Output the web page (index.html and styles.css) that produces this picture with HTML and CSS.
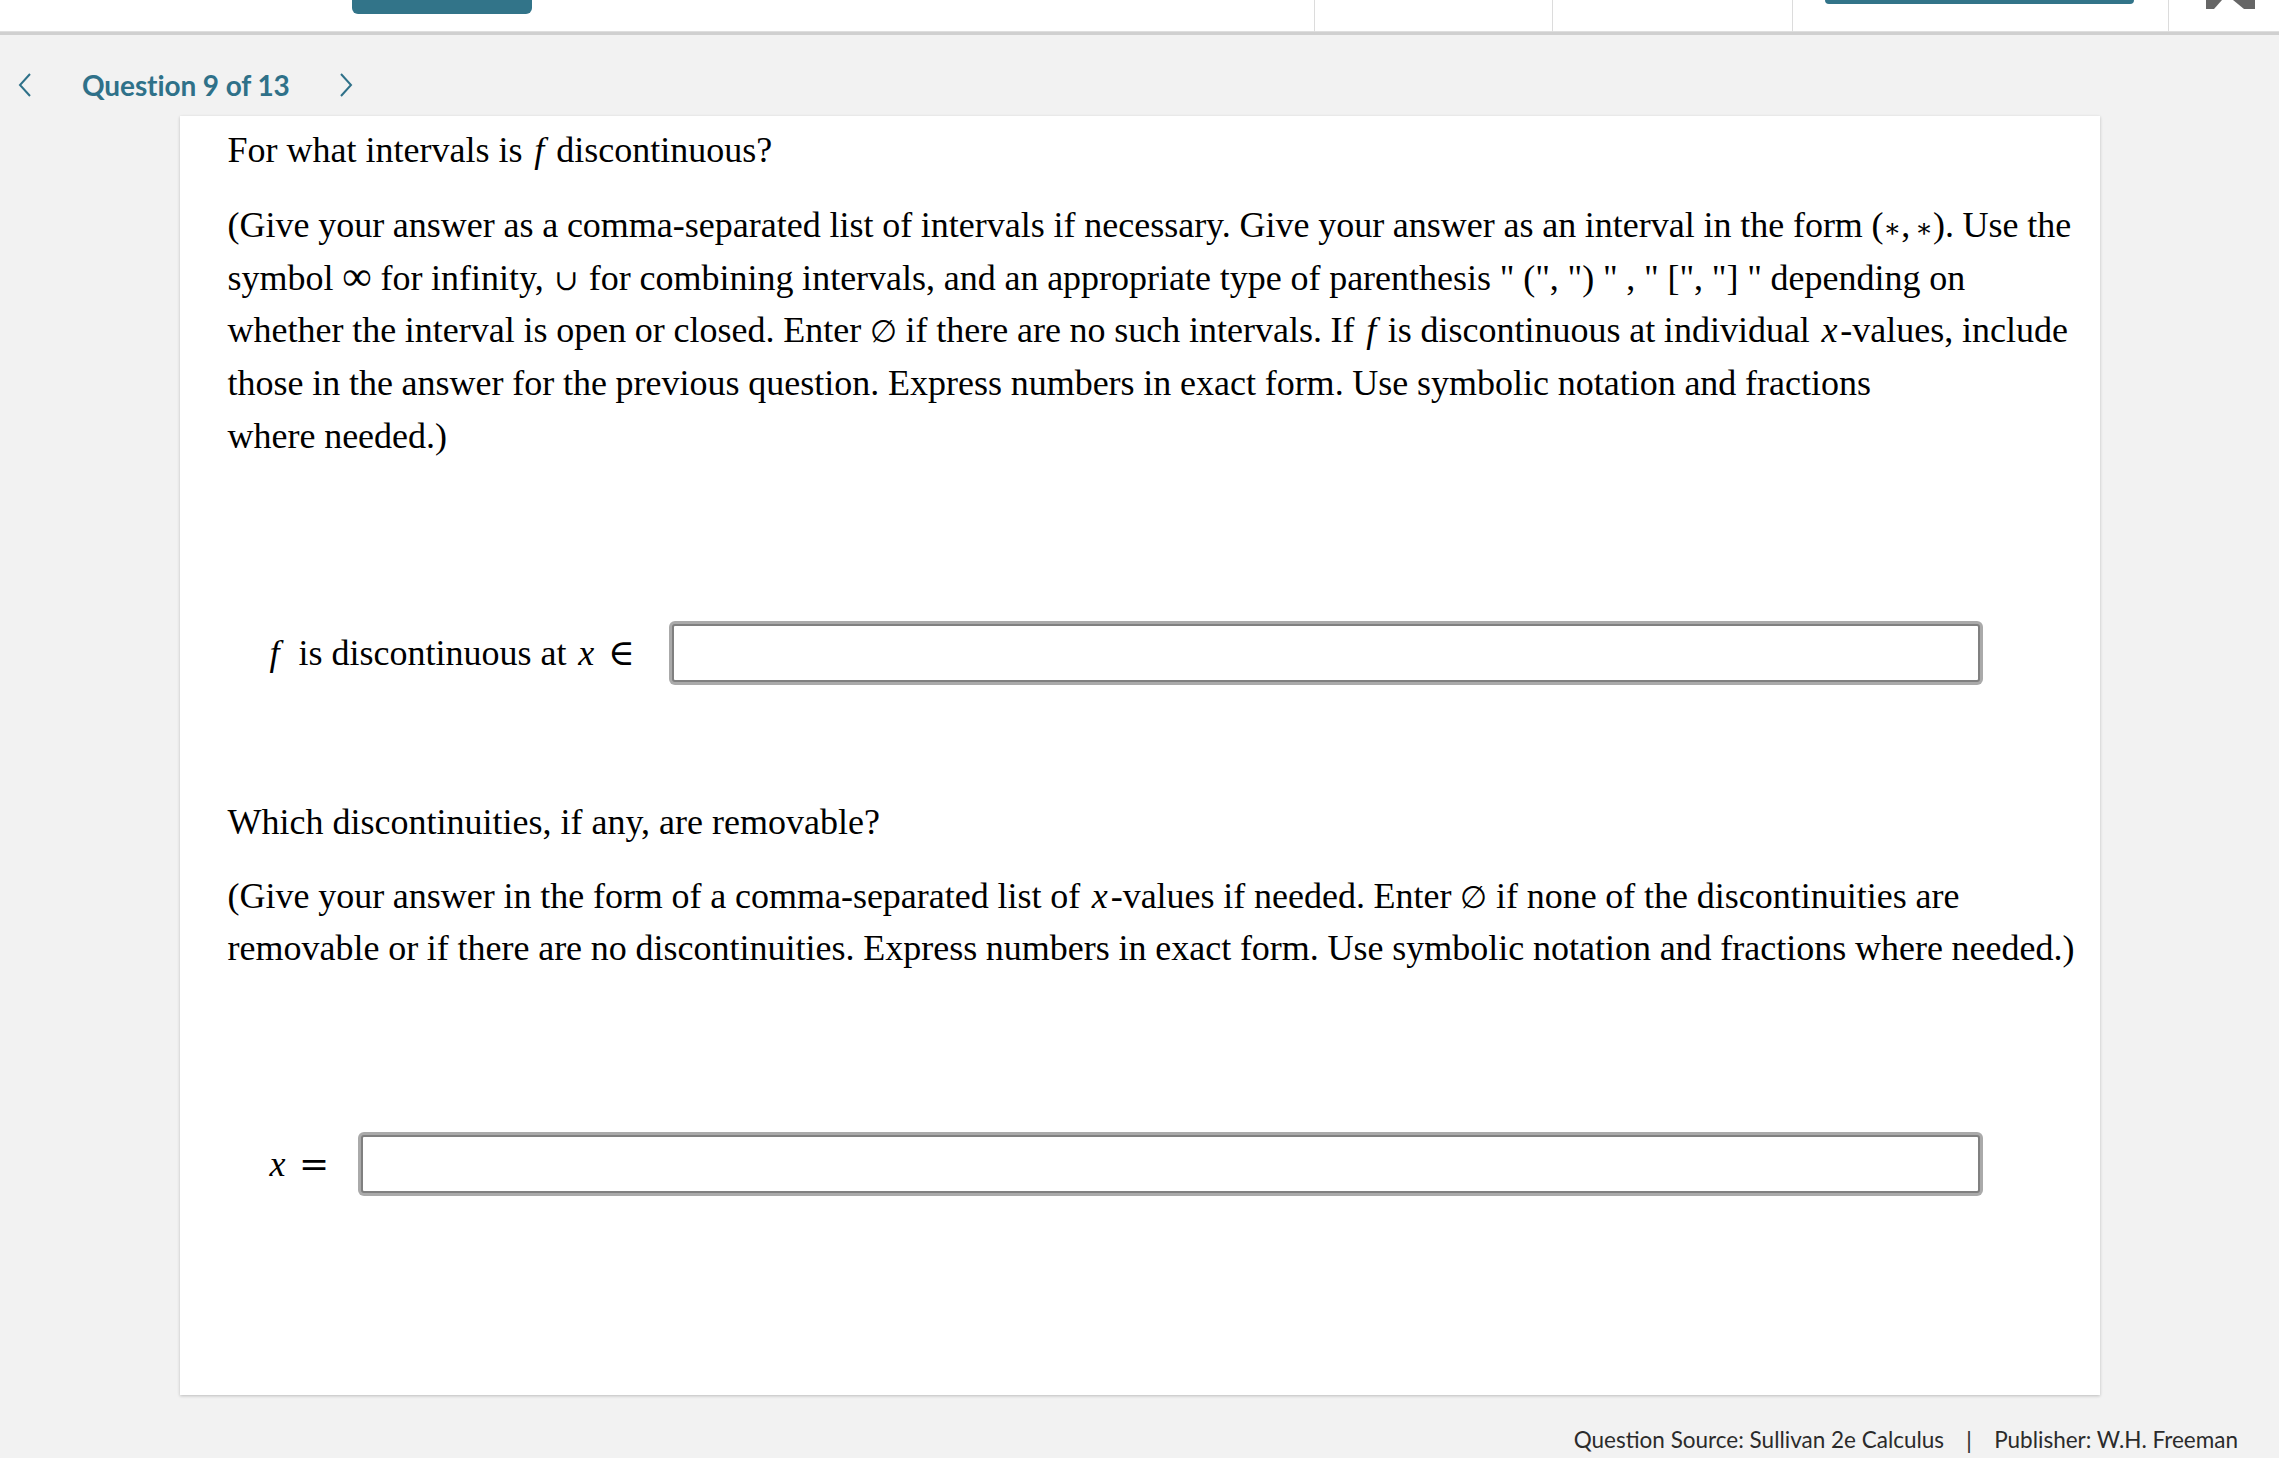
FILE: index.html
```html
<!DOCTYPE html>
<html lang="en">
<head>
<meta charset="utf-8">
<title>Question 9 of 13</title>
<link rel="stylesheet" href="styles.css">
</head>
<body>
<header class="topbar">
  <div class="seg seg-main"><span class="tab-btn"></span></div>
  <div class="seg seg-a"></div>
  <div class="seg seg-b"></div>
  <div class="seg seg-c"><span class="top-bar-accent"></span></div>
  <div class="seg seg-d">
    <svg class="top-icon" width="49" height="10" viewBox="0 0 49 10"><polygon points="0,0 16,0 8,9 0,9" fill="#666"/><polygon points="27,0 49,0 49,9 38,9" fill="#666"/></svg>
  </div>
</header>

<nav class="qnav">
  <svg class="chev chev-left" width="14" height="24" viewBox="0 0 14 24"><polyline points="12,1 2,12 12,23" fill="none" stroke="#2f7189" stroke-width="2"/></svg>
  <span class="qnav-title">Question 9 of 13</span>
  <svg class="chev chev-right" width="14" height="24" viewBox="0 0 14 24"><polyline points="2,1 12,12 2,23" fill="none" stroke="#2f7189" stroke-width="2"/></svg>
</nav>

<main class="card">
  <p class="q-heading">For what intervals is <i class="m">f</i> discontinuous?</p>
  <p class="q-text">(Give your answer as a comma-separated list of intervals if necessary. Give your answer as an interval in the form (<span class="sym ast">∗</span>,<span class="thin"> </span><span class="sym ast">∗</span>). Use the symbol <span class="inf">∞</span> for infinity, <span class="sym cup">∪</span> for combining intervals, and an appropriate type of parenthesis " (", ") " , " [", "] " depending on whether the interval is open or closed. Enter <span class="sym empty">∅</span> if there are no such intervals. If <i class="m">f</i> is discontinuous at individual <i class="m">x</i>-values, include those in the answer for the previous question. Express numbers in exact form. Use symbolic notation and fractions<br>where needed.)</p>

  <div class="answer-row row-1">
    <label class="answer-label"><i class="m m-f">f</i> is discontinuous at <i class="m">x</i> <span class="sym rel">∈</span></label>
    <input class="answer-input" type="text" aria-label="f is discontinuous at x in">
  </div>

  <p class="q-heading q-heading-2">Which discontinuities, if any, are removable?</p>
  <p class="q-text">(Give your answer in the form of a comma-separated list of <i class="m">x</i>-values if needed. Enter <span class="sym empty">∅</span> if none of the discontinuities are removable or if there are no discontinuities. Express numbers in exact form. Use symbolic notation and fractions where needed.)</p>

  <div class="answer-row row-2">
    <label class="answer-label"><i class="m">x</i> <span class="sym rel">=</span></label>
    <input class="answer-input" type="text" aria-label="x equals">
  </div>
</main>

<footer class="source">
  <span>Question Source: Sullivan 2e Calculus</span>
  <span class="sep">|</span>
  <span>Publisher: W.H. Freeman</span>
</footer>
</body>
</html>
```

FILE: styles.css
```css
html, body {
  margin: 0;
  padding: 0;
}
body {
  background: #f2f2f2;
  font-family: "Liberation Serif", "Times New Roman", serif;
  color: #000;
}

/* top bar */
.topbar {
  display: flex;
  height: 32px;
  background: #fff;
  border-bottom: 3px solid #d0d0d0;
  box-shadow: inset 0 -1px 0 #dedede;
}
.seg {
  height: 32px;
  box-sizing: border-box;
}
.seg-main { width: 1314px; }
.seg-a { width: 238px; border-left: 1px solid #dcdcdc; }
.seg-b { width: 240px; border-left: 1px solid #dcdcdc; }
.seg-c { width: 376px; border-left: 1px solid #dcdcdc; }
.seg-d { flex: 1; border-left: 1px solid #dcdcdc; }
.tab-btn {
  display: block;
  margin-left: 352px;
  width: 180px;
  height: 14px;
  background: #327489;
  border-radius: 0 0 6px 6px;
}
.top-bar-accent {
  display: block;
  margin-left: 32px;
  width: 309px;
  height: 4px;
  background: #327489;
  border-radius: 0 0 4px 4px;
}
.top-icon {
  display: block;
  margin-left: 37px;
}

/* question nav */
.qnav {
  display: flex;
  align-items: center;
  height: 81px;
  box-sizing: border-box;
  padding: 27px 0 8px 18px;
}
.chev { display: block; flex: none; }
.qnav-title {
  margin-left: 50px;
  font-family: Lato, "Open Sans", sans-serif;
  font-weight: 700;
  font-size: 28px;
  color: #2f7189;
  line-height: 32px;
  letter-spacing: -0.1px;
}
.chev-right { margin-left: 49px; }

/* card */
.card {
  width: 1920px;
  margin: 0 auto;
  box-sizing: border-box;
  background: #fff;
  padding: 8px 19px 202px 48px;
  box-shadow: 0 1px 3px rgba(0,0,0,0.22);
  font-size: 36px;
  line-height: 52.8px;
}
.card p { margin: 0; }
.q-text {
  margin-top: 22px !important;
  word-spacing: -0.3px;
}
.q-heading-2 { margin-top: 114px !important; }
.q-heading-2 + .q-text { margin-top: 21px !important; }
.m {
  font-style: italic;
  font-family: "Liberation Serif", "Times New Roman", serif;
  padding: 0 0.08em;
}
.sym {
  font-family: "DejaVu Serif", "Liberation Serif", serif;
  font-size: 0.8em;
  line-height: 0;
}
.ast { font-size: 0.72em; }
.thin { font-size: 0.6em; line-height: 0; }
.inf {
  font-family: "Liberation Serif", serif;
  font-size: 1.15em;
  line-height: 0;
}
.cup {
  font-size: 0.8em;
  margin: 0 0.06em;
}
.empty {
  font-family: "Liberation Serif", "DejaVu Serif", serif;
  font-size: 0.85em;
}

.answer-row {
  display: flex;
  align-items: center;
  padding-left: 39px;
  margin-right: 98px;
}
.row-1 { margin-top: 161px; gap: 34px; }
.row-2 { margin-top: 160px; gap: 29px; }
.answer-label {
  white-space: nowrap;
  font-size: 36px;
  line-height: 40px;
}
.answer-label .m-f { margin-right: 0.2em; }
.answer-label .rel {
  font-size: 1em;
  line-height: 40px;
  margin-left: 0.05em;
}
.answer-input {
  flex: 1;
  height: 58px;
  box-sizing: border-box;
  border: 2px solid #808080;
  border-radius: 3px;
  box-shadow: 0 0 0 3px #aaaaaa;
  background: #fff;
  font-size: 30px;
  font-family: "Liberation Serif", serif;
  padding: 0 10px;
  outline: none;
  margin: 0 3px;
}

/* footer */
.source {
  display: flex;
  justify-content: flex-end;
  align-items: center;
  gap: 22px;
  padding-right: 41px;
  margin-top: 31px;
  font-family: Lato, "Open Sans", sans-serif;
  font-size: 22.5px;
  line-height: 28px;
  color: #2b2b2b;
}
.sep { font-size: 24px; color: #333; }
```
